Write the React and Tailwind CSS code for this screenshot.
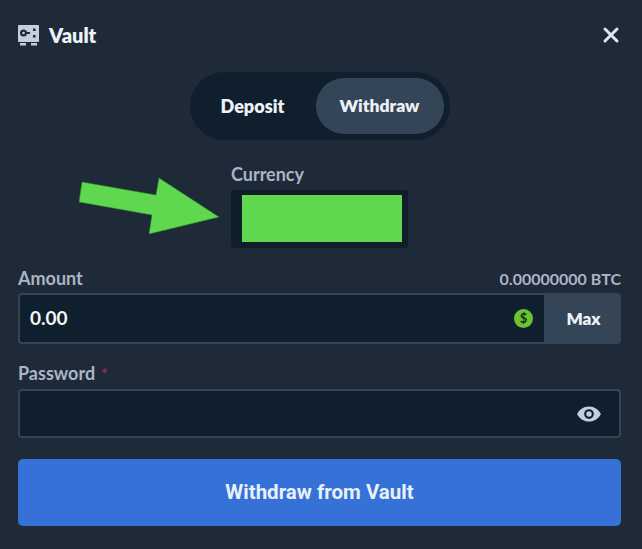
import React from "react";

const font = { fontFamily: '"Lato", "Liberation Sans", sans-serif' };

function VaultIcon() {
  return (
    <svg width="21" height="21" viewBox="0 0 21 21" className="shrink-0">
      <rect x="0" y="0" width="21" height="17" rx="1" fill="#c3cfde" />
      <circle cx="5.500" cy="8" r="3.500" fill="#1e2a38" />
      <circle cx="5.500" cy="8" r="1.300" fill="#c3cfde" />
      <rect x="8" y="7" width="4" height="2" fill="#1e2a38" />
      <rect x="15" y="3.500" width="2.500" height="2.500" fill="#1e2a38" />
      <rect x="15" y="10" width="2.500" height="2.500" fill="#1e2a38" />
      <rect x="2" y="18" width="6" height="2.500" fill="#c3cfde" />
      <rect x="13" y="18" width="6" height="2.500" fill="#c3cfde" />
    </svg>
  );
}

function Arrow() {
  return (
    <svg width="142" height="58" viewBox="0 0 142 58" className="shrink-0">
      <polygon points="3,6 77,19 80,2 140,41 70,58 73,39 0,26" fill="#5fd84f" stroke="#2f8a2a" strokeWidth="0.5" />
    </svg>
  );
}

export default function App() {
  return (
    <div style={font} className="w-[642px] h-[549px] bg-[#1e2a38] overflow-hidden flex flex-col pl-[18px] pr-[21px]">
      <div className="flex items-center justify-between h-[70px] shrink-0">
        <div className="flex items-center gap-[10px]">
          <VaultIcon />
          <span className="text-[20px] font-extrabold text-[#eef2f7]">Vault</span>
        </div>
        <svg width="18" height="18" viewBox="0 0 18 18" className="mr-[1px]">
          <path d="M3 3l12 12M15 3L3 15" stroke="#dfe6ee" strokeWidth="3" strokeLinecap="round" />
        </svg>
      </div>

      <div className="flex justify-center mt-[2px]">
        <div className="flex items-center w-[260px] h-[68px] rounded-full bg-[#0f1f2e] p-[6px]">
          <div className="flex-1 text-center text-[18px] font-extrabold text-[#eef2f7] pr-[6px]">Deposit</div>
          <div className="w-[128px] h-[56px] rounded-full bg-[#344557] flex items-center justify-center text-[17.500px] font-extrabold text-[#eef2f7]">Withdraw</div>
        </div>
      </div>

      <div className="flex mt-[22px] h-[106px] shrink-0">
        <div className="w-[61px] shrink-0" />
        <div className="mt-[14px]"><Arrow /></div>
        <div className="flex flex-col ml-[10px]">
          <span className="text-[18px] font-bold text-[#aab5c7] leading-[24px]">Currency</span>
          <div className="w-[177px] h-[58px] mt-[4px] bg-[#101d2b] rounded-[3px] flex items-start pt-[5px] pl-[11px]">
            <div className="w-[160px] h-[47px] shrink-0 bg-[#5fd84f]" />
          </div>
        </div>
      </div>

      <div className="flex items-end justify-between h-[24px] -mt-[2px]">
        <span className="text-[18px] font-bold text-[#aab5c7] leading-[24px]">Amount</span>
        <span className="text-[16px] font-bold text-[#aab5c7] leading-[22px]">0.00000000 BTC</span>
      </div>
      <div className="flex h-[51px] mt-[3px] rounded-[4px] border-2 border-[#344557] bg-[#344557] overflow-hidden">
        <div className="flex-1 bg-[#101f2e] flex items-center justify-between pl-[10px] pr-[11px]">
          <span className="text-[19px] font-bold text-[#f4f6f9]">0.00</span>
          <span className="w-[19px] h-[19px] rounded-full bg-[#6cc22f] flex items-center justify-center text-[13px] font-bold leading-none text-[#16331a]">$</span>
        </div>
        <div className="w-[75px] flex items-center justify-center pl-[4px] text-[17px] font-extrabold text-[#eef2f7]">Max</div>
      </div>

      <div className="flex items-center h-[24px] mt-[17px]">
        <span className="text-[18px] font-bold text-[#aab5c7]">Password</span>
        <span className="text-[15px] font-bold text-[#9c2b52] ml-[6px]">*</span>
      </div>
      <div className="flex items-center justify-end h-[49px] mt-[4px] rounded-[4px] border-2 border-[#344557] bg-[#101f2e] pr-[17px]">
        <svg width="26" height="26" viewBox="0 0 24 24">
          <path fillRule="evenodd" fill="#c3cfde" d="M12 5C7 5 2.900 8 1 12c1.900 4 6 7 11 7s9.100-3 11-7c-1.900-4-6-7-11-7zm0 11.500a4.500 4.500 0 1 1 0-9 4.500 4.500 0 0 1 0 9zm0-7a2.500 2.500 0 1 0 0 5 2.500 2.500 0 0 0 0-5z" />
        </svg>
      </div>

      <div style={{ fontFamily: 'Roboto, sans-serif' }} className="flex items-center justify-center h-[67px] mt-[21px] rounded-[5px] bg-[#3571d6] text-[20.500px] font-bold text-[#e8f1fb]">
        Withdraw from Vault
      </div>
    </div>
  );
}
